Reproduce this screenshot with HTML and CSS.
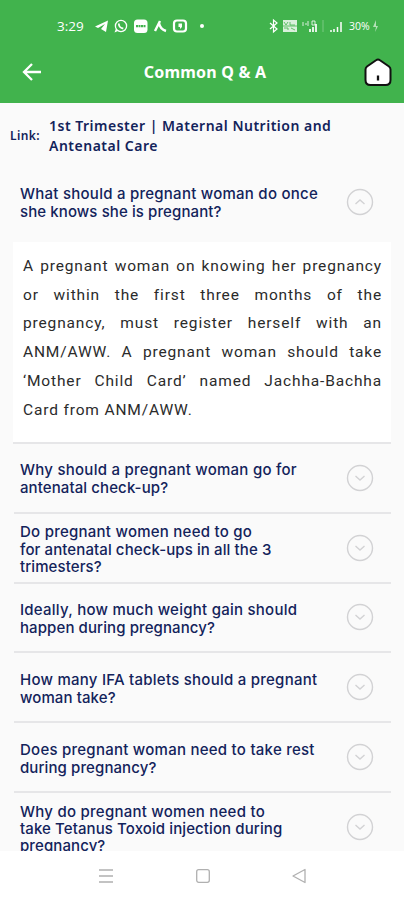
FILE: index.html
```html
<!DOCTYPE html>
<html lang="en">
<head>
  <meta charset="UTF-8">
  <meta name="viewport" content="width=device-width, initial-scale=1.0">
  <title>Common Q &amp; A</title>
  <link rel="stylesheet" href="styles.css">
</head>
<body>
  <div class="app">
    <header class="header">
      <div class="status">
        <span class="time">3:29</span>
        <svg class="apps" width="110" height="16" viewBox="0 0 110 16">
          <path fill="#fff" d="M0 8.500 13 2.500 11 14 6 11 10 6 3 10z"/>
          <circle cx="26" cy="8" r="5.600" fill="none" stroke="#fff" stroke-width="1.300"/>
          <path fill="#fff" d="M19.500 14.500l1.500-4 2 2.500z"/>
          <path d="M23.800 5.500c0 2.500 1.800 4.800 4.500 5" fill="none" stroke="#fff" stroke-width="1.800"/>
          <rect x="39" y="1.500" width="13.500" height="13.500" rx="3.500" fill="#fff"/>
          <path d="M41 8.200h9.500" stroke="#41b34d" stroke-width="2.200" stroke-dasharray="2 .5"/>
          <path d="M65 3l-5 10M64 5q1 6 7 8" fill="none" stroke="#fff" stroke-width="2.400"/>
          <rect x="79" y="2.500" width="12" height="11" rx="3" fill="none" stroke="#fff" stroke-width="2.200"/>
          <path d="M83.500 5.500h3.500v3.500l-2 2v-2h-1.500z" fill="#fff"/>
          <circle cx="107" cy="8" r="2" fill="#fff"/>
        </svg>
        <svg class="signals" width="76" height="16" viewBox="0 0 76 16">
          <path d="M1 5l7 6-3.500 3V2L8 5l-7 6" fill="none" stroke="#fff" stroke-width="1.200"/>
          <rect x="14" y="2" width="14" height="12" fill="#fff" opacity=".8"/>
          <path d="M15 4l2 3 2-3M21 4v3h5M15 10h4v2M22 10l4 2M14 8h14" fill="none" stroke="#41b34d" stroke-width=".8"/>
          <path d="M34 4v4M36 6h2M39 3v5M43 3h3v4h-3z" fill="none" stroke="#fff" opacity=".8"/>
          <path d="M41 14V11M44 14V9M47 14V6" stroke="#fff" stroke-width="1.700"/>
          <path d="M54 2v12" stroke="#fff" opacity=".3"/>
          <path d="M62 14v-2M65 14v-3M68.500 14V9M72 14V4" stroke="#fff" stroke-width="1.500"/>
        </svg>
        <span class="battery">30%</span>
        <svg width="7" height="14" viewBox="0 0 7 14"><path d="M4 1L1 8h3l-1 5 3-6H4z" fill="#fff" opacity=".6"/></svg>
      </div>
      <div class="toolbar">
        <svg class="back" width="20" height="20" viewBox="0 0 20 20"><path d="M10 2L2 10l8 8M2.500 10H19" fill="none" stroke="#fff" stroke-width="2.300"/></svg>
        <h1>Common Q &amp; A</h1>
        <svg class="home" width="28" height="29" viewBox="0 0 28 29">
          <path d="M12 2.300q2-1.500 4 0l9 6.200q1.500 1.200 1.500 3V22q0 5-5 5h-15q-5 0-5-5V11.500q0-1.800 1.500-3z" fill="#fff" stroke="#111" stroke-width="2"/>
          <path d="M14 17.500v5" stroke="#111" stroke-width="2.300"/>
        </svg>
      </div>
    </header>

    <main class="content">
      <div class="link">
        <span class="label">Link:</span>
        <strong>1st Trimester | Maternal Nutrition and<br>Antenatal Care</strong>
      </div>

      <div class="item open">
        <h2>What should a pregnant woman do once<br>she knows she is pregnant?</h2>
        <svg class="toggle" viewBox="0 0 28 28"><circle cx="14" cy="14" r="12.500"/><path d="M9.500 16l4.500-4 4.500 4"/></svg>
      </div>
      <div class="answer">
        <p>A pregnant woman on knowing her pregnancy or within the first three months of the pregnancy, must register herself with an ANM/AWW. A pregnant woman should take ‘Mother Child Card’ named Jachha-Bachha Card from ANM/AWW.</p>
      </div>

      <div class="item">
        <h2>Why should a pregnant woman go for<br>antenatal check-up?</h2>
        <svg class="toggle" viewBox="0 0 28 28"><circle cx="14" cy="14" r="12.500"/><path d="M9.500 12l4.500 4 4.500-4"/></svg>
      </div>
      <div class="item long">
        <h2>Do pregnant women need to go<br>for antenatal check-ups in all the 3<br>trimesters?</h2>
        <svg class="toggle" viewBox="0 0 28 28"><circle cx="14" cy="14" r="12.500"/><path d="M9.500 12l4.500 4 4.500-4"/></svg>
      </div>
      <div class="item">
        <h2>Ideally, how much weight gain should<br>happen during pregnancy?</h2>
        <svg class="toggle" viewBox="0 0 28 28"><circle cx="14" cy="14" r="12.500"/><path d="M9.500 12l4.500 4 4.500-4"/></svg>
      </div>
      <div class="item">
        <h2>How many IFA tablets should a pregnant<br>woman take?</h2>
        <svg class="toggle" viewBox="0 0 28 28"><circle cx="14" cy="14" r="12.500"/><path d="M9.500 12l4.500 4 4.500-4"/></svg>
      </div>
      <div class="item">
        <h2>Does pregnant woman need to take rest<br>during pregnancy?</h2>
        <svg class="toggle" viewBox="0 0 28 28"><circle cx="14" cy="14" r="12.500"/><path d="M9.500 12l4.500 4 4.500-4"/></svg>
      </div>
      <div class="item long">
        <h2>Why do pregnant women need to<br>take Tetanus Toxoid injection during<br>pregnancy?</h2>
        <svg class="toggle" viewBox="0 0 28 28"><circle cx="14" cy="14" r="12.500"/><path d="M9.500 12l4.500 4 4.500-4"/></svg>
      </div>
    </main>

    <nav class="navbar">
      <svg width="14" height="16" viewBox="0 0 14 16"><path d="M0 2h14M0 8h14M0 14h14"/></svg>
      <svg width="14" height="16" viewBox="0 0 14 16"><rect x=".7" y="1.700" width="12.600" height="12.600" rx="2"/></svg>
      <svg width="14" height="16" viewBox="0 0 14 16"><path d="M13 1.500v13L1 8z" stroke-linejoin="round"/></svg>
    </nav>
  </div>
</body>
</html>
```
FILE: styles.css
```css
* { box-sizing: border-box; }
body { margin: 0; background: #fff; }
.app { width: 404px; height: 900px; display: flex; flex-direction: column; overflow: hidden; }

.header { height: 103px; flex: none; background: #41b34d; color: #fff; }
.status { height: 52px; padding-left: 57px; display: flex; align-items: center; font-family: "Open Sans", sans-serif; }
.time { width: 38px; font-size: 13.5px; }
.signals { margin-left: 64px; }
.battery { width: 23px; margin-left: 4px; font-size: 10.5px; }
.toolbar { height: 40px; padding: 0 12px 0 22px; display: flex; align-items: center; justify-content: space-between; }
.toolbar h1 { margin: 0 0 0 4px; font: bold 16px "Noto Sans", sans-serif; letter-spacing: 0.2px; }

.content { height: 748px; flex: none; overflow: hidden; background: #fafafa; color: #13235b; }
.link { height: 65px; padding: 13px 0 0 10px; display: flex; font-family: "Noto Sans", sans-serif; }
.link .label { width: 39px; padding-top: 11px; font-size: 12px; font-weight: 600; line-height: 18px; letter-spacing: 0.4px; }
.link strong { font-size: 14px; font-weight: 600; line-height: 20px; letter-spacing: 0.5px; white-space: nowrap; }

.item { height: 69.8px; margin: 0 13px 0 14px; padding: 0 17px 0 6px; display: flex; align-items: center; justify-content: space-between; border-bottom: 2px solid #e6e6e8; }
.item.open { height: 74px; padding-bottom: 6px; border-bottom: 0; }
.item h2 { margin: 0; padding-top: 3px; font: 500 15px/18px Inter, sans-serif; letter-spacing: 0.1px; white-space: nowrap; }
.item h2::first-line { letter-spacing: 0.25px; }
.item.open h2 { padding-top: 1px; }
.item.long h2 { line-height: 17.2px; }
.toggle { width: 28px; height: 28px; flex: none; fill: none; stroke: #d2d2d4; stroke-width: 1.4; }

.answer { height: 202px; margin: 0 13px 0 13px; padding: 10px 9px 0 10px; background: #fff; border-bottom: 2px solid #e6e6e8; }
.answer p { margin: 0; color: #2b2b2b; font: 15.5px/28.7px Roboto, sans-serif; letter-spacing: 0.85px; text-align: justify; }

.navbar { flex: 1; padding: 0 98px 0 99px; display: flex; align-items: center; justify-content: space-between; background: #fff; }
.navbar svg { fill: none; stroke: #b0b0b0; stroke-width: 1.3; }
```
